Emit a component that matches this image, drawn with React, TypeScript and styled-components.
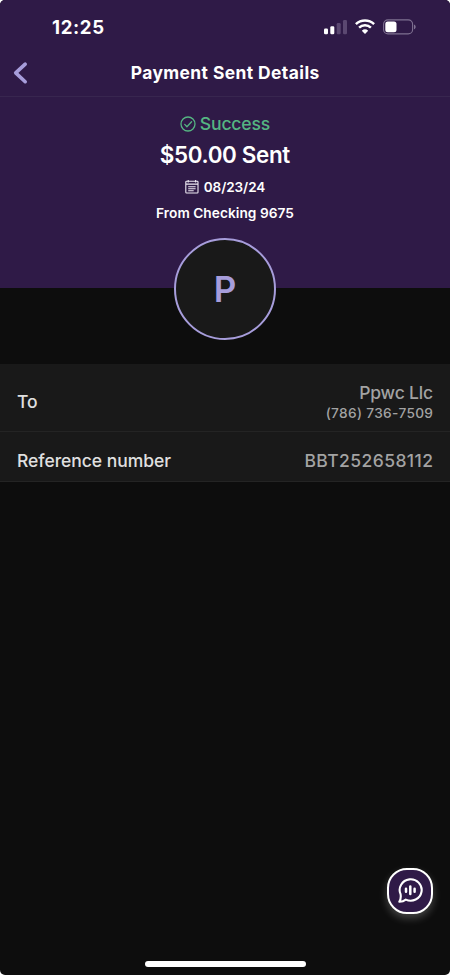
import React from "react";
import styled, { createGlobalStyle } from "styled-components";

const colors = {
  purple: "#2f1a47",
  lavender: "#a79ddb",
  green: "#55b582",
  page: "#0d0d0d",
  panel: "#191919",
};

const GlobalStyle = createGlobalStyle`
  * { box-sizing: border-box; }
  body { margin: 0; background: #fff; }
`;

const Screen = styled.main`
  position: relative;
  width: 450px;
  height: 975px;
  display: flex;
  flex-direction: column;
  overflow: hidden;
  border-radius: 5px;
  background: ${colors.page};
  color: #fff;
  font-family: Inter, "Liberation Sans", sans-serif;
`;

const Hero = styled.header`
  height: 288px;
  flex: none;
  display: flex;
  flex-direction: column;
  background: ${colors.purple};
`;

const StatusBar = styled.div`
  height: 54px;
  display: flex;
  align-items: center;
  justify-content: space-between;
  padding: 0 34px 0 52px;
`;

const Text = styled.span<{ $size: number; $weight?: number; $tracking?: number; $color?: string }>`
  font-size: ${(p) => p.$size}px;
  font-weight: ${(p) => p.$weight ?? 500};
  letter-spacing: ${(p) => p.$tracking ?? 0}px;
  margin-right: ${(p) => -(p.$tracking ?? 0)}px;
  color: ${(p) => p.$color ?? "#fff"};
  line-height: 1.2;
  white-space: nowrap;
`;

const StatusIcons = styled.div`
  display: flex;
  align-items: center;
  gap: 8px;
  svg { display: block; }
`;

const NavBar = styled.nav`
  height: 43px;
  display: grid;
  grid-template-columns: 60px 1fr 60px;
  align-items: center;
  justify-items: center;
  border-bottom: 1px solid #38264f;
  padding-bottom: 4px;
`;

const BackButton = styled.button`
  justify-self: start;
  display: flex;
  margin-left: 12px;
  padding: 0;
  border: 0;
  background: none;
`;

const Summary = styled.section`
  display: flex;
  flex-direction: column;
  align-items: center;
  padding-top: 15px;
`;

const SummaryLine = styled.div<{ $height: number; $gap?: number }>`
  height: ${(p) => p.$height}px;
  display: flex;
  align-items: center;
  gap: ${(p) => p.$gap ?? 0}px;
`;

const Avatar = styled.div`
  position: relative;
  flex: none;
  align-self: center;
  display: flex;
  align-items: center;
  justify-content: center;
  width: 102px;
  height: 102px;
  margin-top: -50px;
  border: 2px solid ${colors.lavender};
  border-radius: 50%;
  background: ${colors.panel};
`;

const Details = styled.section`
  margin-top: 24px;
  background: ${colors.panel};
`;

const Row = styled.div<{ $height: number; $top: number }>`
  height: ${(p) => p.$height}px;
  padding: ${(p) => p.$top}px 17px 0;
  display: flex;
  align-items: center;
  justify-content: space-between;
  border-bottom: 1px solid #242424;
`;

const RowValue = styled.div`
  display: flex;
  flex-direction: column;
  align-items: flex-end;
  gap: 1.5px;
`;

const ChatButton = styled.button`
  position: absolute;
  left: 387px;
  top: 868px;
  width: 46px;
  height: 46px;
  display: flex;
  align-items: center;
  justify-content: center;
  padding: 0;
  border: 2px solid #fff;
  border-radius: 20px;
  background: ${colors.purple};
  box-shadow: 0 4px 9px rgba(255, 255, 255, 0.24);
`;

const HomeIndicator = styled.div`
  width: 161px;
  height: 6px;
  margin: auto auto 8px;
  border-radius: 3px;
  background: #fff;
`;

const Signal = () => (
  <svg width="23" height="16" viewBox="0 0 23 16">
    <rect x="0" y="9.5" width="4" height="5.8" rx="1.2" fill="#fff" />
    <rect x="6.3" y="7.2" width="4" height="8.1" rx="1.2" fill="#fff" />
    <rect x="12.7" y="4" width="4" height="11.3" rx="1.2" fill="#5b4871" />
    <rect x="19" y="1" width="4" height="14.3" rx="1.2" fill="#5b4871" />
  </svg>
);

const Wifi = () => (
  <svg width="20" height="16" viewBox="0 0 20 16" fill="none" stroke="#fff" strokeWidth="2.5">
    <path d="M.9 5.2a13.1 13.1 0 0 1 18.2 0" />
    <path d="M4.1 8.7a8.6 8.6 0 0 1 11.8 0" />
    <path d="M6.8 11.7a4.7 4.7 0 0 1 6.4 0L10 15Z" fill="#fff" stroke="none" />
  </svg>
);

const Battery = () => (
  <svg width="33" height="16" viewBox="0 0 33 16">
    <rect x=".6" y=".9" width="29" height="14" rx="4.4" fill="none" stroke="#7f7191" strokeWidth="1.1" />
    <rect x="2.3" y="2.6" width="11.2" height="10.6" rx="2.5" fill="#fff" />
    <path d="M31 5.6c2.2.8 2.2 3.8 0 4.6Z" fill="#7f7191" />
  </svg>
);

const BackIcon = () => (
  <svg width="16" height="24" viewBox="0 0 16 24" fill="none" stroke={colors.lavender} strokeWidth="3.6" strokeLinecap="round" strokeLinejoin="round">
    <path d="M13.2 3.2 3.7 11.9l9.5 8.8" />
  </svg>
);

const SuccessIcon = () => (
  <svg width="16" height="16" viewBox="0 0 16 16" fill="none" stroke={colors.green} strokeWidth="1.3" strokeLinecap="round" strokeLinejoin="round">
    <circle cx="8" cy="8" r="7" />
    <path d="m4.7 8.4 2.2 2.3 4.7-5" />
  </svg>
);

const CalendarIcon = () => (
  <svg width="14" height="15" viewBox="0 0 14 15" fill="none" stroke="#eee9f3" strokeWidth="1.1">
    <rect x=".8" y="1.2" width="12.2" height="11.8" rx=".8" />
    <path d="M1 4.1h12M3.2 0v2.4M10.6 0v2.4M3.2 6.7h7.4M3.2 8.7h7.4M3.2 10.7h5.5" />
  </svg>
);

const ChatIcon = () => (
  <svg width="26" height="26" viewBox="0 0 26 26" fill="none" stroke="#fff" strokeWidth="2.1" strokeLinecap="round" strokeLinejoin="round">
    <path d="M3.6 16.3A11 10.7 0 1 1 8.8 21.6Q6 23.8 2.3 23.7Q4.3 20.6 3.6 16.3Z" />
    <path d="M9 10.8v3M13.3 8.6v7.4M17.6 10.8v3" strokeWidth="2.5" />
  </svg>
);

export default function App() {
  return (
    <>
      <GlobalStyle />
      <Screen>
        <Hero>
          <StatusBar>
            <Text $size={18.6} $weight={700} $tracking={0.62}>12:25</Text>
            <StatusIcons>
              <Signal />
              <Wifi />
              <Battery />
            </StatusIcons>
          </StatusBar>
          <NavBar>
            <BackButton aria-label="Back"><BackIcon /></BackButton>
            <Text $size={17.4} $weight={700} $tracking={0.42}>Payment Sent Details</Text>
          </NavBar>
          <Summary>
            <SummaryLine $height={24} $gap={4}>
              <SuccessIcon />
              <Text $size={17.6} $weight={550} $tracking={-0.2} $color={colors.green}>Success</Text>
            </SummaryLine>
            <SummaryLine $height={38}>
              <Text $size={22.4} $weight={560} $tracking={-0.35}>$50.00 Sent</Text>
            </SummaryLine>
            <SummaryLine $height={26} $gap={5}>
              <CalendarIcon />
              <Text $size={13.5} $weight={600} $tracking={-0.05}>08/23/24</Text>
            </SummaryLine>
            <SummaryLine $height={26}>
              <Text $size={13.7} $weight={600} $tracking={0.04}>From Checking 9675</Text>
            </SummaryLine>
          </Summary>
        </Hero>
        <Avatar>
          <Text $size={35} $weight={600} $color={colors.lavender}>P</Text>
        </Avatar>
        <Details>
          <Row $height={68} $top={8}>
            <Text $size={17.5} $color="#e0e0e0">To</Text>
            <RowValue>
              <Text $size={17.5} $tracking={-0.2} $color="#a3a3a3">Ppwc Llc</Text>
              <Text $size={13.7} $tracking={0.33} $color="#a3a3a3">(786) 736-7509</Text>
            </RowValue>
          </Row>
          <Row $height={50} $top={7}>
            <Text $size={17.5} $tracking={-0.04} $color="#e0e0e0">Reference number</Text>
            <Text $size={17.5} $tracking={0.42} $color="#a3a3a3">BBT252658112</Text>
          </Row>
        </Details>
        <ChatButton aria-label="Open assistant"><ChatIcon /></ChatButton>
        <HomeIndicator />
      </Screen>
    </>
  );
}
